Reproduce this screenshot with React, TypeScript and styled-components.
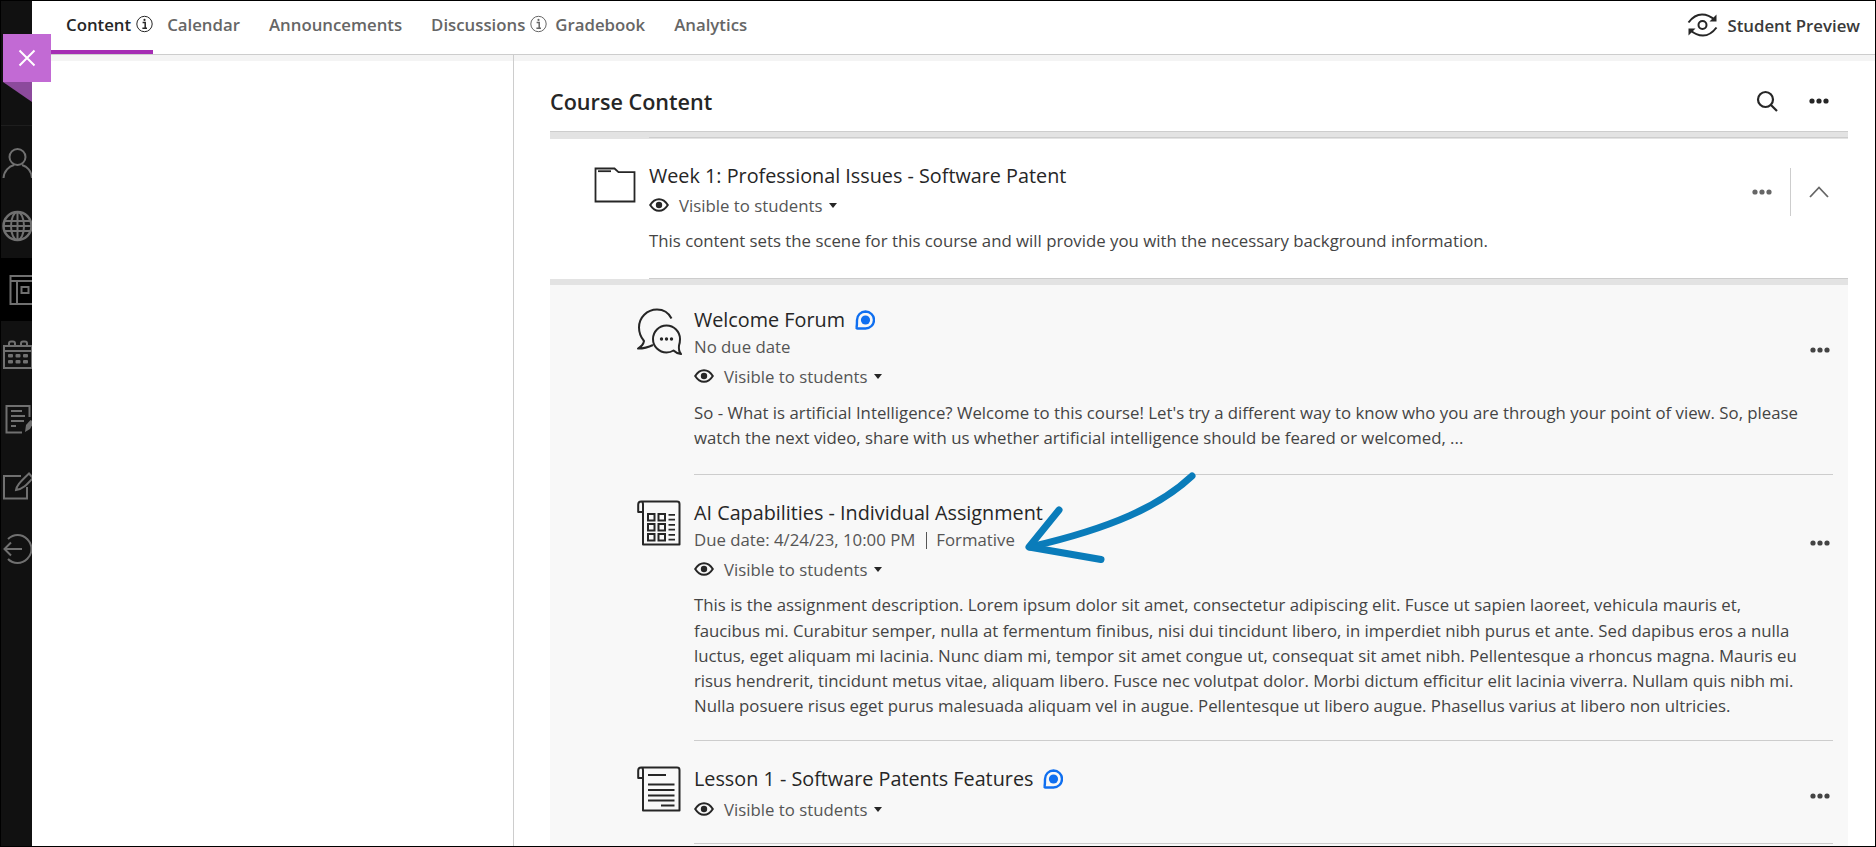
import { ReactNode } from 'react';
import styled, { createGlobalStyle } from 'styled-components';

const GlobalStyle = createGlobalStyle`
  html, body {
    margin: 0;
    padding: 0;
    background: #fff;
  }
  body {
    font-family: "Open Sans", "Liberation Sans", sans-serif;
    color: #262626;
  }
`;

const TABS = [
  { label: 'Content', info: true, active: true },
  { label: 'Calendar' },
  { label: 'Announcements' },
  { label: 'Discussions', info: true },
  { label: 'Gradebook' },
  { label: 'Analytics' }
];

function InfoIcon() {
  return (
    <svg width="17" height="18" viewBox="0 0 17 18" fill="none">
      <circle cx="8.5" cy="9" r="7.7" stroke="currentColor" strokeWidth="1" />
      <circle cx="8.5" cy="4.9" r="1.1" fill="currentColor" />
      <path d="M6.6 7.6H9.2V12.9M6.4 13.2H11" stroke="currentColor" strokeWidth="1.5" />
    </svg>
  );
}

function DotsIcon({ color = '#262626' }: { color?: string }) {
  return (
    <svg width="20" height="6" viewBox="0 0 20 6" fill={color}>
      <circle cx="3" cy="3" r="2.6" />
      <circle cx="10" cy="3" r="2.6" />
      <circle cx="17" cy="3" r="2.6" />
    </svg>
  );
}

function EyeIcon() {
  return (
    <svg width="20" height="14" viewBox="0 0 20 14" fill="none">
      <path d="M1.2 7C3.5 3.3 6.5 1.2 10 1.2S16.5 3.3 18.8 7C16.5 10.7 13.5 12.8 10 12.8S3.5 10.7 1.2 7Z" stroke="#262626" strokeWidth="2" />
      <circle cx="10" cy="7" r="3.2" fill="#262626" />
    </svg>
  );
}

function ChatBadge() {
  return (
    <svg width="20" height="20" viewBox="0 0 20 20" fill="none">
      <path d="M10.5 1.5A8.5 8.5 0 0 1 10.5 18.5H2.5C1.8 18.5 1.4 18 1.6 17.3C1.9 15.8 2 14 2 10A8.5 8.5 0 0 1 10.5 1.5Z" stroke="#0f6ff0" strokeWidth="2.4" strokeLinejoin="round" />
      <circle cx="10.5" cy="10" r="4.6" fill="#0f6ff0" />
    </svg>
  );
}

function VisibleMenu() {
  return (
    <Visible>
      <EyeIcon />
      <span>Visible to students</span>
      <Caret />
    </Visible>
  );
}

function FolderIcon() {
  return (
    <svg width="42" height="36" viewBox="0 0 42 36" fill="none">
      <path d="M1.5 34.5V1.5H20.5L24.5 5.2H40.5V34.5Z" stroke="#262626" strokeWidth="1.8" />
      <path d="M4 4.2H17" stroke="#262626" strokeWidth="1.8" />
    </svg>
  );
}

function ForumIcon() {
  return (
    <svg width="48" height="50" viewBox="0 0 48 50" fill="none" stroke="#262626" strokeWidth="2">
      <path d="M35.5 11.5C32.5 5.5 27 2.5 21 2.5C11 2.5 3 10.5 3 20.5C3 26 5 30.5 8 34C7.5 37 5.5 39.5 2 41.5C7.5 41.5 12 40.5 17 38" strokeLinejoin="round" />
      <path d="M30.5 18.5C23 18.5 17 24.5 17 32S23 45.5 30.5 45.5C33.5 45.5 35.5 44.8 37.5 43.5C39.5 45.5 41.5 46.5 45 47C43 44.8 42.6 42 43 38.5C43.7 36.5 44 34.5 44 32C44 24.5 38 18.5 30.5 18.5Z" strokeLinejoin="round" />
      <g fill="#262626" stroke="none">
        <circle cx="25.5" cy="32" r="1.7" />
        <circle cx="30.5" cy="32" r="1.7" />
        <circle cx="35.5" cy="32" r="1.7" />
      </g>
    </svg>
  );
}

function ScrollShape() {
  return (
    <path d="M7 12H2.2V4.5C2.2 2.8 3.5 1.6 5.2 1.6C6.8 1.6 7 3 7 4.5V44.5H43.5V4C43.5 2.6 42.5 1.6 41 1.6H5.2" stroke="#262626" strokeWidth="2" fill="none" strokeLinejoin="round" />
  );
}

function AssignmentIcon() {
  const rows = [14, 24, 34];
  return (
    <svg width="46" height="46" viewBox="0 0 46 46" fill="none">
      <ScrollShape />
      {rows.map((y) => (
        <g key={y} stroke="#262626">
          <rect x="12" y={y} width="6.5" height="6.5" strokeWidth="2" />
          <rect x="22.5" y={y} width="6.5" height="6.5" strokeWidth="2" />
          <path d={`M32.5 ${y + 0.8}H39M32.5 ${y + 5.6}H39`} strokeWidth="1.8" />
        </g>
      ))}
    </svg>
  );
}

function LessonIcon() {
  return (
    <svg width="46" height="46" viewBox="0 0 46 46" fill="none">
      <ScrollShape />
      <path d="M12 10.5H30M12 20H38.5M12 25.5H38.5M12 31H38.5M12 36H38.5M25 41H38.5" stroke="#262626" strokeWidth="2" transform="translate(0 -1.5)" />
    </svg>
  );
}

function PreviewIcon() {
  return (
    <svg width="31" height="24" viewBox="0 0 31 24" fill="none" stroke="#262626" strokeWidth="2">
      <path d="M1.5 9.5C6 3.5 10.5 1.5 15 1.5C20 1.5 24 3.5 28 7" />
      <path d="M29.5 14.5C25 20.5 20.5 22.5 16 22.5C11 22.5 7 20.5 3 17" />
      <circle cx="15.5" cy="12" r="4" />
      <path d="M29.5 1.5V8.5H22.5Z" fill="#262626" strokeWidth="0" />
      <path d="M1.5 22.5V15.5H8.5Z" fill="#262626" strokeWidth="0" />
    </svg>
  );
}

const SIDE_ICONS: { key: string; height: number; active?: boolean; icon: ReactNode }[] = [
  {
    key: 'person',
    height: 63,
    icon: (
      <path d="M2.5 31C3 24 8 19.5 13 18M31 31C30.5 24 26 19.5 21 18M16.5 2A8 8 0 1 0 16.5 18A8 8 0 1 0 16.5 2Z" />
    )
  },
  {
    key: 'globe',
    height: 64,
    icon: (
      <>
        <circle cx="16.5" cy="16" r="14" strokeWidth="2.5" />
        <ellipse cx="16.5" cy="16" rx="6.5" ry="14" />
        <path d="M16.5 2V30M3 11H30M2.5 16H30.5M3 21H30" />
      </>
    )
  },
  {
    key: 'course',
    height: 63,
    active: true,
    icon: (
      <>
        <path d="M33 2H9.5V30H33M9.5 7H33M16 7V30" />
        <rect x="20.5" y="13" width="7" height="6" />
      </>
    )
  },
  {
    key: 'calendar',
    height: 65,
    icon: (
      <>
        <path d="M3 8H31V30H3ZM3 13H31M8 8V5.5C8 4 9 3.5 10 3.5H12C13 3.5 14 4 14 5.5V8M20 8V5.5C20 4 21 3.5 22 3.5H24C25 3.5 26 4 26 5.5V8" />
        <g fill="#707070" stroke="none">
          <rect x="7" y="16" width="5" height="3.5" rx="1" />
          <rect x="14.5" y="16" width="5" height="3.5" rx="1" />
          <rect x="22" y="16" width="5" height="3.5" rx="1" />
          <rect x="7" y="22" width="5" height="3.5" rx="1" />
          <rect x="14.5" y="22" width="5" height="3.5" rx="1" />
          <rect x="22" y="22" width="5" height="3.5" rx="1" />
        </g>
      </>
    )
  },
  {
    key: 'grades',
    height: 65,
    icon: (
      <>
        <path d="M21 29.5H5.5V3H28.5V14M10 8H21M10 13H24M10 18H23M10 23H15" />
        <path d="M24 29L25 22L29.5 17L33 18.5L29 26Z" fill="#707070" stroke="none" />
      </>
    )
  },
  {
    key: 'edit',
    height: 65,
    icon: (
      <g transform="translate(0 3)">
        <path d="M20 5H3V27.5H26V16" />
        <path d="M15 19C15.5 15 18 12 28 2.5L32 7C26 13.5 22 18 15 19Z" />
      </g>
    )
  },
  {
    key: 'back',
    height: 65,
    icon: (
      <>
        <path d="M7 6C9.5 3.7 13 2 16.5 2C24 2 30.5 8.5 30.5 16S24 30 16.5 30C13 30 9.5 28.5 7 26" />
        <path d="M21 16H4M10 9.5L3.5 16L10 22.5" />
      </>
    )
  }
];

const LINES_FORUM = [
  "So - What is artificial Intelligence? Welcome to this course! Let's try a different way to know who you are through your point of view. So, please",
  'watch the next video, share with us whether artificial intelligence should be feared or welcomed, ...'
];

const LINES_ASSIGNMENT = [
  'This is the assignment description. Lorem ipsum dolor sit amet, consectetur adipiscing elit. Fusce ut sapien laoreet, vehicula mauris et,',
  'faucibus mi. Curabitur semper, nulla at fermentum finibus, nisi dui tincidunt libero, in imperdiet nibh purus et ante. Sed dapibus eros a nulla',
  'luctus, eget aliquam mi lacinia. Nunc diam mi, tempor sit amet congue ut, consequat sit amet nibh. Pellentesque a rhoncus magna. Mauris eu',
  'risus hendrerit, tincidunt metus vitae, aliquam libero. Fusce nec volutpat dolor. Morbi dictum efficitur elit lacinia viverra. Nullam quis nibh mi.',
  'Nulla posuere risus eget purus malesuada aliquam vel in augue. Pellentesque ut libero augue. Phasellus varius at libero non ultricies.'
];

export default function App() {
  return (
    <>
      <GlobalStyle />
      <Frame>
        <Sidebar>
          <SideTop />
          {SIDE_ICONS.map((item) => (
            <SideItem key={item.key} $active={item.active} $height={item.height}>
              <svg width="31" height="32" viewBox="0 0 31 32" fill="none" stroke="#707070" strokeWidth="2">
                {item.icon}
              </svg>
            </SideItem>
          ))}
        </Sidebar>

        <Main>
          <TabBar>
            {TABS.map((tab) => (
              <Tab key={tab.label} $active={tab.active} $info={tab.info}>
                {tab.label}
                {tab.info && <InfoIcon />}
              </Tab>
            ))}
            <PreviewButton>
              <PreviewIcon />
              Student Preview
            </PreviewButton>
          </TabBar>
          <TabShadow />

          <Columns>
            <LeftPane />
            <RightPane>
              <ContentHeader>
                <ContentTitle>Course Content</ContentTitle>
                <HeaderActions>
                  <svg width="24" height="24" viewBox="0 0 24 24" fill="none" stroke="#262626" strokeWidth="2.2">
                    <circle cx="10.5" cy="10.5" r="7.5" />
                    <path d="M16 16L22 22" />
                  </svg>
                  <DotsIcon />
                </HeaderActions>
              </ContentHeader>

              <TopRule />

              <FolderRow>
                <FolderIconBox>
                  <FolderIcon />
                </FolderIconBox>
                <FolderText>
                  <FolderTitle>Week 1: Professional Issues - Software Patent</FolderTitle>
                  <VisibleMenu />
                  <FolderDesc>
                    This content sets the scene for this course and will provide you with the necessary background information.
                  </FolderDesc>
                </FolderText>
                <FolderActions>
                  <DotsIcon color="#666" />
                  <ActionDivider />
                  <svg width="20" height="12" viewBox="0 0 20 12" fill="none" stroke="#666" strokeWidth="1.8">
                    <path d="M1 11L10 1.5L19 11" />
                  </svg>
                </FolderActions>
              </FolderRow>

              <MiddleRule />

              <ItemsPanel>
                <Item>
                  <ItemIcon>
                    <ForumIcon />
                  </ItemIcon>
                  <ItemBody>
                    <ItemHeader>
                      <div>
                        <ItemTitle>
                          Welcome Forum
                          <ChatBadge />
                        </ItemTitle>
                        <ItemMeta>No due date</ItemMeta>
                        <VisibleMenu />
                      </div>
                      <DotsIcon color="#444" />
                    </ItemHeader>
                    <Description>
                      {LINES_FORUM.map((line) => (
                        <DescLine key={line}>{line}</DescLine>
                      ))}
                    </Description>
                  </ItemBody>
                </Item>

                <Item>
                  <ItemIcon>
                    <AssignmentIcon />
                  </ItemIcon>
                  <ItemBody>
                    <ItemHeader>
                      <div>
                        <ItemTitle>AI Capabilities - Individual Assignment</ItemTitle>
                        <ItemMeta>
                          Due date: 4/24/23, 10:00 PM
                          <MetaSep />
                          Formative
                        </ItemMeta>
                        <VisibleMenu />
                      </div>
                      <DotsIcon color="#444" />
                    </ItemHeader>
                    <Description>
                      {LINES_ASSIGNMENT.map((line) => (
                        <DescLine key={line}>{line}</DescLine>
                      ))}
                    </Description>
                  </ItemBody>
                </Item>

                <Item>
                  <ItemIcon>
                    <LessonIcon />
                  </ItemIcon>
                  <ItemBody>
                    <ItemHeader>
                      <div>
                        <ItemTitle>
                          Lesson 1 - Software Patents Features
                          <ChatBadge />
                        </ItemTitle>
                        <VisibleMenu />
                      </div>
                      <DotsIcon color="#444" />
                    </ItemHeader>
                  </ItemBody>
                </Item>
              </ItemsPanel>
            </RightPane>
          </Columns>
        </Main>

        <CloseFlag>
          <svg width="18" height="18" viewBox="0 0 18 18" fill="none" stroke="#fff" strokeWidth="2">
            <path d="M1.5 1.5L16.5 16.5M16.5 1.5L1.5 16.5" />
          </svg>
        </CloseFlag>
        <FlagFold />

        <ArrowMark width="190" height="120" viewBox="0 0 190 120" fill="none" stroke="#0a7cba" strokeLinecap="round" strokeLinejoin="round" strokeWidth="7">
          <path d="M172 16C140 46 92 68 10 87" />
          <path d="M39 50L9 87L81 99.5" />
        </ArrowMark>
      </Frame>
    </>
  );
}

const Frame = styled.div`
  position: relative;
  display: flex;
  box-sizing: border-box;
  width: 1876px;
  height: 847px;
  border: 1px solid #000;
  overflow: hidden;
  background: #fff;
`;

const Sidebar = styled.aside`
  flex: 0 0 31px;
  display: flex;
  flex-direction: column;
  background: #111;
  overflow: hidden;
`;

const SideTop = styled.div`
  flex: 0 0 124px;
  border-bottom: 1px solid #1e1e1e;
  margin-bottom: 5px;
`;

const SideItem = styled.div<{ $active?: boolean; $height: number }>`
  flex: 0 0 ${(p) => p.$height}px;
  display: flex;
  align-items: center;
  background: ${(p) => (p.$active ? '#000' : 'transparent')};
  svg {
    overflow: visible;
    flex: none;
  }
`;

const Main = styled.main`
  flex: 1;
  display: flex;
  flex-direction: column;
  min-width: 0;
`;

const TabBar = styled.nav`
  flex: 0 0 53px;
  display: flex;
  align-items: center;
  border-bottom: 1px solid #cdcdcd;
`;

const Tab = styled.div<{ $active?: boolean; $info?: boolean }>`
  position: relative;
  display: flex;
  align-items: center;
  gap: 5px;
  height: 100%;
  box-sizing: border-box;
  padding: 0 ${(p) => (p.$info ? 8 : 29)}px 7px ${(p) => (p.$active ? 34 : 0)}px;
  font-size: 16.8px;
  font-weight: 600;
  color: ${(p) => (p.$active ? '#262626' : '#666')};
  ${(p) => p.$active && `
    padding-right: 0;
    margin-right: 14px;
    &::after {
      content: '';
      position: absolute;
      left: 0;
      right: 0;
      bottom: 0;
      height: 4px;
      background: #a52db4;
    }
  `}
`;

const PreviewButton = styled.div`
  margin-left: auto;
  margin-right: 15px;
  display: flex;
  align-items: center;
  gap: 9px;
  font-size: 16.8px;
  font-weight: 600;
  color: #3a3a3a;
  padding-bottom: 5px;
`;

const TabShadow = styled.div`
  flex: 0 0 6px;
  background: #f4f4f4;
`;

const Columns = styled.div`
  flex: 1;
  display: flex;
  min-height: 0;
`;

const LeftPane = styled.div`
  flex: 0 0 481px;
  border-right: 1px solid #cdcdcd;
  margin-top: -6px;
`;

const RightPane = styled.section`
  flex: 1;
  display: flex;
  flex-direction: column;
  padding: 0 27px 0 36px;
  min-width: 0;
`;

const ContentHeader = styled.header`
  flex: 0 0 70px;
  display: flex;
  align-items: center;
  justify-content: space-between;
  padding-top: 10px;
  box-sizing: border-box;
`;

const ContentTitle = styled.h2`
  margin: 0;
  font-size: 21.6px;
  font-weight: 600;
  color: #262626;
`;

const HeaderActions = styled.div`
  display: flex;
  align-items: center;
  gap: 30px;
  padding-right: 19px;
`;

const TopRule = styled.div`
  flex: 0 0 8px;
  box-sizing: border-box;
  background: #e3e3e3;
  border-top: 1px solid #cdcdcd;
`;

const FolderRow = styled.div`
  flex: 0 0 140px;
  box-sizing: border-box;
  display: flex;
  padding: 24px 0 0 44px;
  position: relative;
  &::before,
  &::after {
    content: '';
    position: absolute;
    left: 99px;
    right: 0;
    height: 1px;
    background: #cdcdcd;
  }
  &::before {
    top: -2px;
  }
  &::after {
    bottom: 0;
  }
`;

const FolderIconBox = styled.div`
  flex: 0 0 55px;
  padding-top: 4px;
`;

const FolderText = styled.div`
  flex: 1;
`;

const FolderTitle = styled.h3`
  margin: 0 0 2px;
  font-size: 19.8px;
  line-height: 25px;
  font-weight: 500;
  color: #262626;
`;

const FolderDesc = styled.p`
  margin: 11px 0 0;
  font-size: 16.8px;
  line-height: 25px;
  color: #444;
`;

const FolderActions = styled.div`
  position: absolute;
  top: 29px;
  right: 19px;
  display: flex;
  align-items: center;
  gap: 18px;
  height: 48px;
`;

const ActionDivider = styled.div`
  width: 1px;
  height: 48px;
  background: #cdcdcd;
`;

const MiddleRule = styled.div`
  flex: 0 0 6px;
  background: #e3e3e3;
`;

const ItemsPanel = styled.div`
  flex: 1;
  background: #f8f8f8;
  padding-left: 87px;
`;

const Item = styled.article`
  display: flex;
`;

const ItemIcon = styled.div`
  flex: 0 0 57px;
  padding-top: 25px;
  svg {
    margin-left: -1.5px;
  }
  ${Item}:first-child & {
    padding-top: 22px;
  }
`;

const ItemBody = styled.div`
  flex: 1;
  margin-right: 15px;
  padding: 26px 0 22px;
  border-bottom: 1px solid #cdcdcd;
  ${Item}:first-child & {
    padding: 23px 0 24px;
  }
`;

const ItemHeader = styled.div`
  display: flex;
  align-items: center;
  justify-content: space-between;
  padding-right: 3px;
  > svg {
    margin-top: 4px;
  }
`;

const ItemTitle = styled.h4`
  display: flex;
  align-items: center;
  gap: 10px;
  margin: 0;
  font-size: 19.8px;
  line-height: 24px;
  font-weight: 500;
  color: #262626;
`;

const ItemMeta = styled.div`
  display: flex;
  align-items: center;
  margin-top: 3px;
  font-size: 16.8px;
  line-height: 24px;
  color: #555;
`;

const MetaSep = styled.span`
  display: inline-block;
  width: 1px;
  height: 17px;
  margin: 0 9px 0 11px;
  background: #555;
`;

const Visible = styled.div`
  display: flex;
  align-items: center;
  height: 24px;
  margin-top: 5px;
  font-size: 16.8px;
  color: #555;
  svg {
    margin-right: 10px;
  }
  h4 + & {
    margin-top: 6px;
  }
`;

const Caret = styled.i`
  width: 0;
  height: 0;
  margin-left: 7px;
  border-left: 4.5px solid transparent;
  border-right: 4.5px solid transparent;
  border-top: 5px solid #262626;
`;

const Description = styled.div`
  margin-top: 11px;
  font-size: 16.8px;
  line-height: 25.2px;
  color: #444;
  ${Item}:first-child & {
    margin-top: 12px;
  }
`;

const DescLine = styled.div`
  white-space: nowrap;
`;

const CloseFlag = styled.button`
  position: absolute;
  left: 2px;
  top: 33px;
  width: 48px;
  height: 48px;
  display: flex;
  align-items: center;
  justify-content: center;
  padding: 0;
  border: 0;
  background: #c26ad4;
`;

const FlagFold = styled.div`
  position: absolute;
  left: 2px;
  top: 81px;
  width: 0;
  height: 0;
  border-top: 20px solid #8c4a9c;
  border-left: 29px solid transparent;
`;

const ArrowMark = styled.svg`
  position: absolute;
  left: 1019px;
  top: 459px;
`;
